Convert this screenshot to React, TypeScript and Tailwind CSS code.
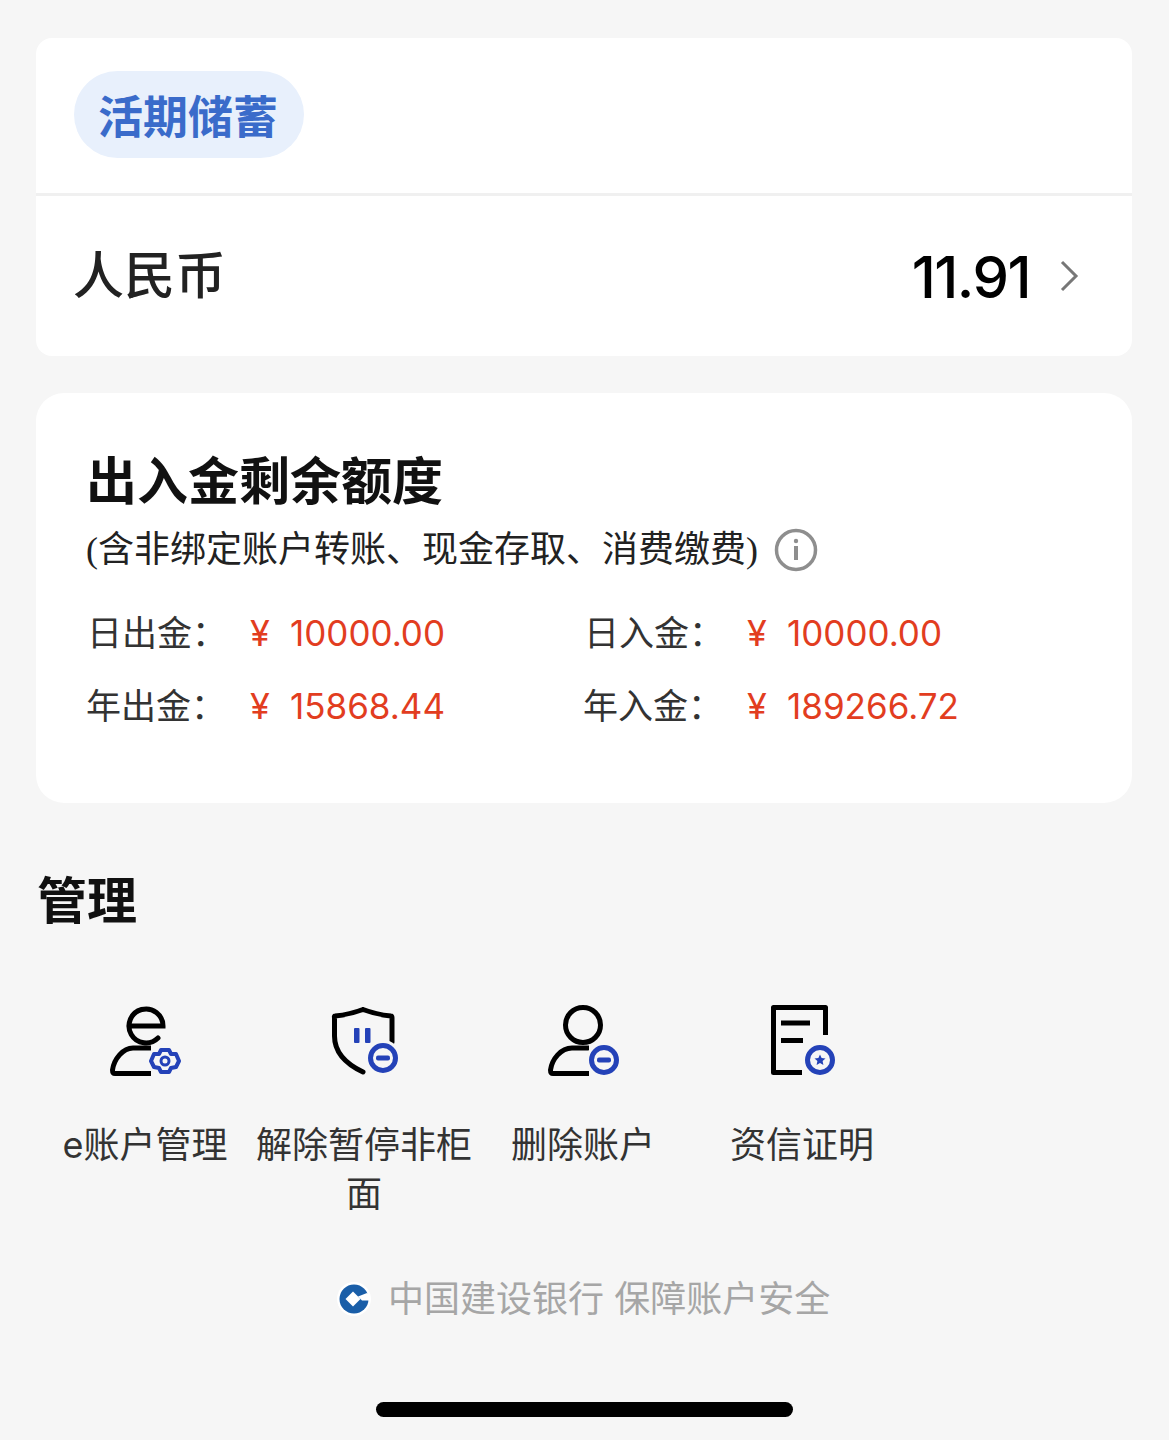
import React from 'react';

const Row = ({ label, amount, offset }: { label: string; amount: string; offset?: boolean }) => (
  <div className="flex items-center h-[36px]">
    <span className={`text-[35px] leading-[36px] text-[#333333] w-[164px] ${offset ? 'pl-[1px]' : ''}`}>{label}</span>
    <span className="text-[36px] leading-[36px] text-[#e23d1f] w-[40px] font-['Inter','Noto_Sans_CJK_SC',sans-serif]">¥</span>
    <span className="text-[35px] leading-[36px] text-[#e23d1f] font-['Inter',sans-serif]">{amount}</span>
  </div>
);

const BLUE = '#2442b8';

const EUserIcon = () => (
  <svg width="72" height="72" viewBox="0 0 72 72" fill="none">
    <path d="M20 22H54A17 17 0 1 0 49 34" stroke="#000" strokeWidth="5" strokeLinecap="round" />
    <path d="M42 44H24C14 44 5 55 3.5 66C3.5 68.500 4 69.500 6 69.500H42" stroke="#000" strokeWidth="5" strokeLinejoin="round" />
    <path d="M52 46L60 46L62 50L67 50L70 57L67 63L62 64L60 68L52 68L50 64L45 63L42 57L45 50L50 50Z" stroke={BLUE} strokeWidth="4" strokeLinejoin="round" />
    <circle cx="56" cy="57" r="4" stroke={BLUE} strokeWidth="3" />
  </svg>
);

const ShieldIcon = () => (
  <svg width="72" height="72" viewBox="0 0 72 72" fill="none">
    <path d="M35 5.500C26 9 17 11 7 12C6 12 6.500 13 6.500 14V32C6.500 48 18 60 35 68M35 5.500C44 9 53 11 63 12C64 12 64 13 64 14V38" stroke="#000" strokeWidth="5" strokeLinecap="round" strokeLinejoin="round" />
    <rect x="26" y="24" width="5.500" height="15" rx="1" fill={BLUE} />
    <rect x="37" y="24" width="5.500" height="15" rx="1" fill={BLUE} />
    <circle cx="55" cy="54" r="18" fill="#f6f6f6" />
    <circle cx="55" cy="54" r="12.500" stroke={BLUE} strokeWidth="5" />
    <rect x="48" y="51.500" width="14" height="5" rx="2" fill={BLUE} />
  </svg>
);

const UserMinusIcon = () => (
  <svg width="72" height="72" viewBox="0 0 72 72" fill="none">
    <circle cx="36" cy="21" r="17.500" stroke="#000" strokeWidth="5" />
    <path d="M42 44H25C14 44 5 55 3.500 66C3.500 68.500 4 69.500 6 69.500H42" stroke="#000" strokeWidth="5" strokeLinejoin="round" />
    <circle cx="57" cy="56" r="18" fill="#f6f6f6" />
    <circle cx="57" cy="56" r="12.500" stroke={BLUE} strokeWidth="5" />
    <rect x="50" y="53.500" width="14" height="5" rx="2" fill={BLUE} />
  </svg>
);

const CertIcon = () => (
  <svg width="72" height="72" viewBox="0 0 72 72" fill="none">
    <path d="M36 68.500H7.500V3.500H59.500V31" stroke="#000" strokeWidth="5" strokeLinejoin="round" />
    <path d="M15 19H44M15 36.500H37" stroke="#000" strokeWidth="5" />
    <circle cx="54" cy="56" r="12.500" stroke={BLUE} strokeWidth="5" />
    <path d="M54 50.500L55.600 54L59.500 54.400L56.600 57L57.400 61L54 59L50.600 61L51.400 57L48.500 54.400L52.400 54Z" fill={BLUE} />
  </svg>
);

const CcbLogo = () => (
  <svg width="34" height="34" viewBox="0 0 34 34">
    <circle cx="17" cy="17" r="17" fill="#ffffff" />
    <circle cx="17" cy="17" r="14.500" fill="#1a5ea8" />
    <path d="M16 9.500L23.500 17L16 24.500L8.500 17Z" fill="#fff" />
    <path d="M21 14.500L30 11L33 13L33 18.500L25 18.500Z" fill="#fff" />
  </svg>
);

const items = [
  { icon: <EUserIcon />, label: 'e账户管理', w: 'w-[218px]' },
  { icon: <ShieldIcon />, label: '解除暂停非柜面', w: 'w-[220px]' },
  { icon: <UserMinusIcon />, label: '删除账户', w: 'w-[218px]' },
  { icon: <CertIcon />, label: '资信证明', w: 'w-[220px]' },
];

export default function App() {
  return (
    <div className="relative w-[1169px] h-[1440px] overflow-hidden bg-[#f6f6f6] pl-[36px] font-['Inter','Noto_Sans_CJK_SC',sans-serif] flex flex-col items-start">
      {/* 账户卡片 */}
      <div className="mt-[38px] w-[1096px] h-[318px] bg-white rounded-[16px] flex flex-col">
        <div className="h-[158px] border-b-[3px] border-[#f0f0f0] pl-[38px] pt-[33px]">
          <div className="w-[230px] h-[87px] pr-[2px] rounded-full bg-[#e8f0fc] flex items-center justify-center text-[45px] font-semibold text-[#3a6bca] font-['Noto_Sans_CJK_SC',sans-serif]">
            活期储蓄
          </div>
        </div>
        <div className="flex-1 flex items-center justify-between pl-[37px] pr-[53px]">
          <span className="mb-[8px] text-[51px] font-medium text-[#222222] font-['Noto_Sans_CJK_SC',sans-serif]">人民币</span>
          <div className="flex items-center gap-[29px]">
            <span className="mt-[2px] text-[58px] font-medium text-black tracking-[-1.5px]">11.91</span>
            <svg width="20" height="32" viewBox="0 0 20 32" fill="none">
              <path d="M3 2L17 16L3 30" stroke="#777" strokeWidth="3" />
            </svg>
          </div>
        </div>
      </div>

      {/* 额度 */}
      <div className="mt-[37px] w-[1096px] h-[410px] bg-white rounded-[28px] pl-[50px] pt-[54px]">
        <h2 className="text-[51px] leading-[62px] font-semibold text-[#111111] font-['Noto_Sans_CJK_SC',sans-serif]">出入金剩余额度</h2>
        <div className="mt-[18px] flex items-center h-[46px]">
          <span className="text-[36px] leading-[44px] text-[#222222] font-['Liberation_Serif','Noto_Sans_CJK_SC',serif]">(含非绑定账户转账、现金存取、消费缴费)</span>
          <svg className="ml-[16px]" width="44" height="44" viewBox="0 0 44 44" fill="none">
            <circle cx="22" cy="22" r="19.500" stroke="#8e8e8e" strokeWidth="3.500" />
            <circle cx="22" cy="13" r="2.200" fill="#8e8e8e" />
            <rect x="20" y="18" width="4" height="14" fill="#8e8e8e" />
          </svg>
        </div>
        <div className="mt-[42px] grid grid-cols-[497px_497px] gap-y-[37px]">
          <Row label="日出金：" amount="10000.00" offset />
          <Row label="日入金：" amount="10000.00" offset />
          <Row label="年出金：" amount="15868.44" />
          <Row label="年入金：" amount="189266.72" />
        </div>
      </div>

      {/* 管理 */}
      <div className="w-[1096px] mt-[63px]">
        <h2 className="pl-[1px] text-[50px] leading-[62px] font-semibold text-[#111111] font-['Noto_Sans_CJK_SC',sans-serif]">管理</h2>
        <div className="mt-[76px] flex">
          {items.map(item => (
            <div key={item.label} className={`${item.w} flex flex-col items-center`}>
              {item.icon}
              <p className="mt-[45px] px-[1px] text-center text-[36px] leading-[49px] text-[#333333] break-all">{item.label}</p>
            </div>
          ))}
        </div>
      </div>

      {/* 页脚 */}
      <div className="absolute left-[337px] top-[1279px] flex items-center gap-[17px]">
        <CcbLogo />
        <span className="text-[36px] leading-[40px] text-[#a6a6a6]">中国建设银行 保障账户安全</span>
      </div>
      <div className="absolute left-[376px] top-[1402px] w-[417px] h-[15px] rounded-full bg-black" />
    </div>
  );
}
